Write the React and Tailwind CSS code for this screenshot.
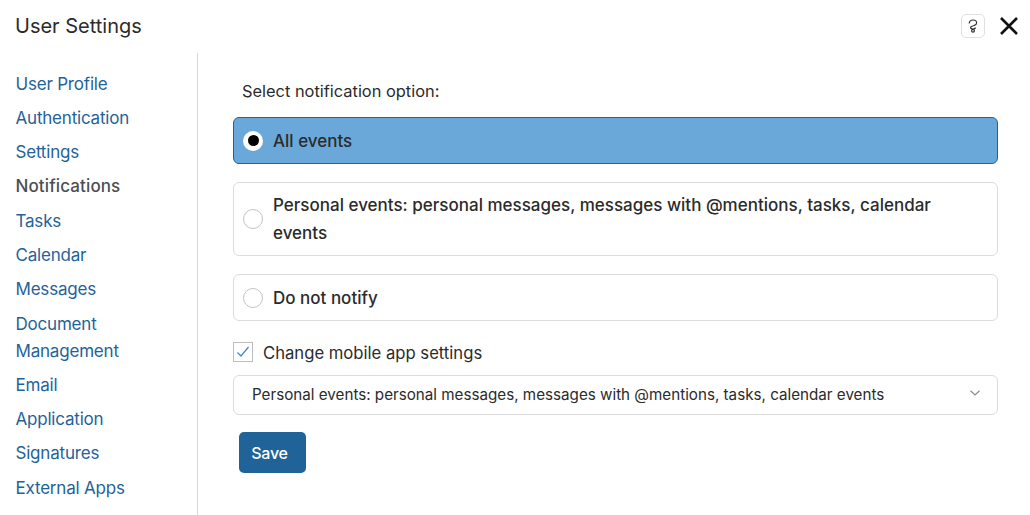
import React from "react";

const links = [
  "User Profile",
  "Authentication",
  "Settings",
  "Notifications",
  "Tasks",
  "Calendar",
  "Messages",
  "Document Management",
  "Email",
  "Application",
  "Signatures",
  "External Apps",
];

const Radio = ({ checked }) => (
  <span
    className={`flex h-5 w-5 shrink-0 items-center justify-center rounded-full bg-white ${
      checked ? "" : "border border-[#c4c4c4]"
    }`}
  >
    {checked && <span className="h-[11px] w-[11px] rounded-full bg-black" />}
  </span>
);

const App = () => {
  return (
    <div className="h-[515px] w-[1030px] overflow-hidden bg-white font-['Inter',sans-serif] text-[#2b2b2b]">
      <header className="flex h-[53px] items-center justify-between pb-[2px] pl-4 pr-[11px]">
        <h1 className="-ml-px text-[20px] leading-[50px]">User Settings</h1>
        <div className="flex items-center gap-[14px]">
          <button className="flex h-6 w-6 items-center justify-center rounded-[5px] border border-[#e0e0e0]">
            <svg width="10" height="14" viewBox="0 0 10 14" fill="none" stroke="#333" strokeWidth="1.2">
              <path d="M1.2 4.4C1.2 2.2 3 1 5 1s3.6 1.2 3.6 3C8.6 6 6.2 6.2 5.2 7" />
              <path d="M5 7C3.7 7 2.6 7.7 2.6 8.6S3.7 10 5 10s2.4-.5 2.4-1.4" />
              <circle cx="5" cy="11.7" r="1.4" />
            </svg>
          </button>
          <button className="flex h-5 w-5 items-center justify-center">
            <svg width="20" height="20" viewBox="0 0 20 20" fill="none" stroke="#111" strokeWidth="2.6">
              <path d="M2 2l16 16M18 2L2 18" />
            </svg>
          </button>
        </div>
      </header>

      <div className="flex h-[462px]">
        <nav className="w-[198px] shrink-0 border-r border-[#d9d9d9] pl-[15.5px] pr-[40px] pt-[17.5px] text-[17px] leading-[27px]">
          <ul className="flex flex-col gap-[7.3px]">
            {links.map((link) => (
              <li
                key={link}
                className={
                  link === "Notifications"
                    ? "font-[550] tracking-[0.12px] text-[#4a4f55]"
                    : "tracking-[-0.2px] text-[#1f6399]"
                }
              >
                {link}
              </li>
            ))}
          </ul>
        </nav>

        <main className="flex-1 pl-[35px] pr-8">
          <p className="ml-[9px] mt-[26px] text-[16.4px] leading-6">Select notification option:</p>

          <div className="mt-[14px] flex h-[47px] items-center gap-[10px] rounded-md border border-[#1f6399] bg-[#6aa8d9] pl-[9px] text-[17px] font-medium">
            <Radio checked />
            <span className="pt-[2px]">All events</span>
          </div>

          <div className="mt-[18px] flex h-[74px] items-center gap-[10px] rounded-md border border-[#dcdcdc] pl-[9px] pr-8 text-[17px] font-medium leading-[28px]">
            <Radio />
            <span>Personal events: personal messages, messages with @mentions, tasks, calendar events</span>
          </div>

          <div className="mt-[18px] flex h-[47px] items-center gap-[10px] rounded-md border border-[#dcdcdc] pl-[9px] text-[17px] font-medium">
            <Radio />
            <span className="pt-[2px]">Do not notify</span>
          </div>

          <label className="mt-[21px] flex h-5 items-center gap-[10px] text-[16.65px]">
            <span className="flex h-5 w-5 items-center justify-center border border-[#bdbdbd]">
              <svg width="14" height="12" viewBox="0 0 14 12" fill="none" stroke="#3f86c9" strokeWidth="1.2">
                <path d="M1.5 6.5l3.5 3.5 7.5-9" />
              </svg>
            </span>
            <span className="pt-[2px]">Change mobile app settings</span>
          </label>

          <div className="mt-[13px] flex h-10 items-center justify-between rounded-md border border-[#dcdcdc] pl-[18px] pr-[17px] text-[15.2px]">
            <span>Personal events: personal messages, messages with @mentions, tasks, calendar events</span>
            <svg className="mb-[5px]" width="10" height="6" viewBox="0 0 10 6" fill="none" stroke="#8a8a8a" strokeWidth="1.2">
              <path d="M.5.8L5 5l4.5-4.2" />
            </svg>
          </div>

          <button className="ml-[6px] mt-[17px] h-[41px] w-[67px] rounded-[5px] bg-[#1f6399] pr-[6px] text-[16px] font-medium tracking-[-0.2px] text-white">
            Save
          </button>
        </main>
      </div>
    </div>
  );
};

export default App;
